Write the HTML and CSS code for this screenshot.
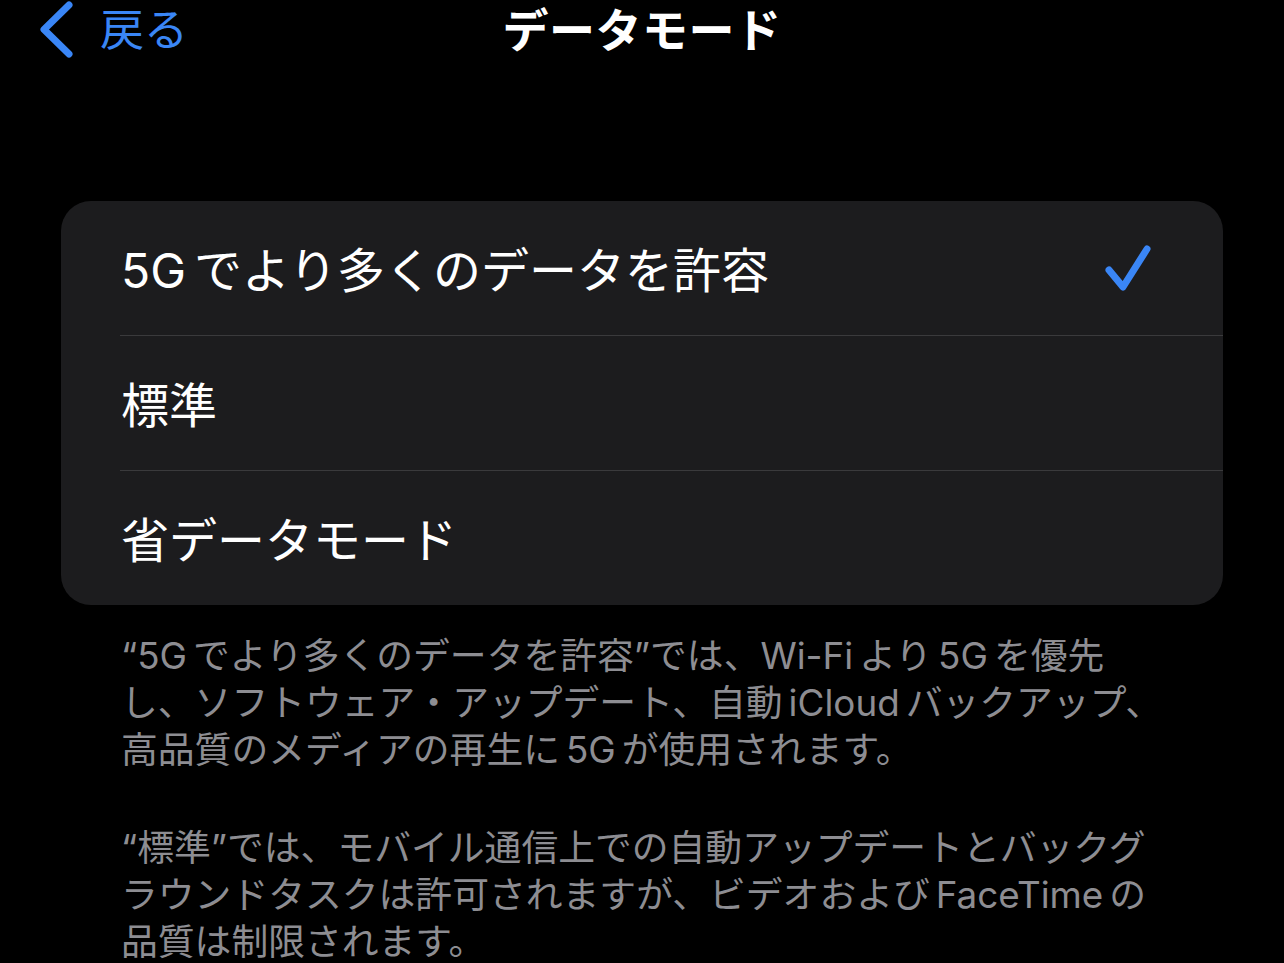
FILE: index.html
```html
<!DOCTYPE html>
<html lang="ja">
<head>
<meta charset="utf-8">
<link rel="stylesheet" href="styles.css">
</head>
<body>
<div class="nav">
  <div class="back">
    <svg class="chev" width="40" height="60" viewBox="0 0 40 60"><path d="M29 5 L4 29.5 L29 54" fill="none" stroke="#3a86f6" stroke-width="7" stroke-linecap="round" stroke-linejoin="round"/></svg>
    <span class="back-label">戻る</span>
  </div>
  <div class="title">データモード</div>
  <div></div>
</div>
<div class="card">
  <div class="row"><span class="label">5G<span class="sp"></span>でより多くのデータを許容</span>
    <svg class="check" width="60" height="60" viewBox="0 0 60 60"><path d="M14 31 L28 48 L52 10" fill="none" stroke="#3a86f6" stroke-width="7" stroke-linecap="round" stroke-linejoin="round"/></svg>
  </div>
  <div class="sep"></div>
  <div class="row"><span class="label">標準</span></div>
  <div class="sep"></div>
  <div class="row"><span class="label">省データモード</span></div>
</div>
<div class="footer">
  <p>“5G<span class="sp2"></span>でより多くのデータを許容”では、Wi-Fi<span class="sp2"></span>より<span class="sp2"></span>5G<span class="sp2"></span>を優先<br>し、ソフトウェア・アップデート、自動<span class="sp2"></span>iCloud<span class="sp2"></span>バックアップ、<br>高品質のメディアの再生に<span class="sp2"></span>5G<span class="sp2"></span>が使用されます。</p>
  <p>“標準”では、モバイル通信上での自動アップデートとバックグ<br>ラウンドタスクは許可されますが、ビデオおよび<span class="sp2"></span>FaceTime<span class="sp2"></span>の<br>品質は制限されます。</p>
</div>
</body>
</html>
```

FILE: styles.css
```css
html, body {
  margin: 0;
  padding: 0;
  background: #000;
}
body {
  font-family: "Inter", "Noto Sans CJK JP", "Noto Sans", sans-serif;
  color: #fff;
  width: 1284px;
  height: 963px;
  overflow: hidden;
}
.nav {
  display: grid;
  grid-template-columns: 1fr auto 1fr;
  align-items: center;
  height: 60px;
}
.back {
  display: flex;
  align-items: center;
  padding-left: 40px;
  height: 60px;
}
.chev {
  display: block;
}
.back-label {
  color: #3a86f6;
  font-size: 44px;
  line-height: 60px;
  margin-left: 20px;
}
.title {
  font-size: 46px;
  font-weight: 700;
  line-height: 60px;
  letter-spacing: 0.5px;
}
.card {
  margin: 141px 61px 0 61px;
  background: #1c1c1e;
  border-radius: 30px;
  overflow: hidden;
}
.row {
  height: 134px;
  display: flex;
  align-items: center;
  justify-content: space-between;
  padding: 0 68px 0 60px;
}
.label {
  font-size: 48px;
  line-height: 60px;
  white-space: nowrap;
  margin-top: 5px;
}
.sp { display: inline-block; width: 8px; }
.sp2 { display: inline-block; width: 6px; }
.check { display: block; margin-top: 2px; }
.sep {
  height: 1px;
  background: #3a3a3c;
  margin-left: 59px;
}
.footer {
  margin: 27px 61px 0 121px;
  color: #8d8d92;
  font-size: 36.8px;
  line-height: 47px;
  white-space: nowrap;
}
.footer p {
  margin: 0 0 51px 0;
}
```
